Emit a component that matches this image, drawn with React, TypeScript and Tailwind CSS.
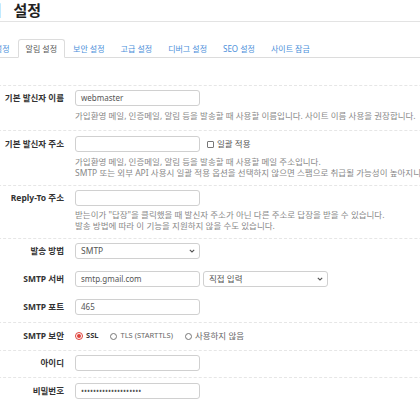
import type { ReactNode } from "react";

const font = { fontFamily: '"Noto Sans", "Noto Sans CJK KR", sans-serif' };

const tabs = ["기본 설정", "알림 설정", "보안 설정", "고급 설정", "디버그 설정", "SEO 설정", "사이트 잠금"];

function Row({ label, children, className = "" }: { label: string; children: ReactNode; className?: string }) {
  return (
    <div className={`flex ${className}`}>
      <div className="w-[107px] shrink-0 pr-[11px] text-right text-[8.5px] font-bold leading-[16px] text-[#333]">
        {label}
      </div>
      <div className="min-w-0 flex-1">{children}</div>
    </div>
  );
}

function Field({ value = "" }: { value?: string }) {
  return (
    <div className="flex h-[16px] w-[125px] items-center rounded-[3px] border border-[#d0d0d0] bg-white px-[5px] text-[8px] text-[#555]">
      {value}
    </div>
  );
}

function Select({ value }: { value: string }) {
  return (
    <div className="flex h-[16px] w-[125px] items-center justify-between rounded-[3px] border border-[#d0d0d0] bg-white pl-[5px] pr-[4px] text-[8.5px] text-[#555]">
      <span>{value}</span>
      <svg width="6" height="4" viewBox="0 0 6 4" fill="none">
        <path d="M0.8 0.8 L3 3 L5.2 0.8" stroke="#555" strokeWidth="1.1" />
      </svg>
    </div>
  );
}

function Help({ children }: { children: ReactNode }) {
  return <p className="whitespace-nowrap text-[8.5px] leading-[11px] text-[#888]">{children}</p>;
}

function Radio({ checked, label, latin }: { checked?: boolean; label: string; latin?: boolean }) {
  return (
    <label className="flex items-center gap-[3px]">
      {checked ? (
        <span className="flex h-[8px] w-[8px] items-center justify-center rounded-full border border-[#e0413a] bg-white">
          <span className="h-[4px] w-[4px] rounded-full bg-[#e0413a]" />
        </span>
      ) : (
        <span className="h-[7px] w-[7px] rounded-full border border-[#777] bg-white" />
      )}
      <span
        className={`${latin ? "text-[7.5px]" : "text-[8.5px]"} ${checked ? "font-bold text-[#333]" : "text-[#666]"}`}
      >
        {label}
      </span>
    </label>
  );
}

export default function App() {
  return (
    <div className="h-[420px] w-[420px] overflow-hidden bg-white" style={font}>
      <div className="ml-[-32px] w-[640px]">
        <div className="h-[22px] border-b border-[#e3e3e3] pl-[6px]">
          <h1 className="text-[15px] font-bold leading-[21px] text-[#222] [word-spacing:8px]">관리 설정</h1>
        </div>

        <div className="ml-[2px] mt-[17px] flex border-b border-[#dcdcdc]">
          {tabs.map((t) => (
            <div
              key={t}
              className={`-mb-px h-[19px] border px-[7px] text-[8px] leading-[17px] ${
                t === "알림 설정"
                  ? "rounded-t-[3px] border-[#dcdcdc] border-b-white bg-white text-[#555]"
                  : "border-transparent text-[#4b8fda]"
              }`}
            >
              {t}
            </div>
          ))}
        </div>

        <div className="mt-[27px] border-t border-dashed border-[#e6e6e6]">
          <Row label="기본 발신자 이름" className="border-b border-dashed border-[#e6e6e6] pb-[9px] pt-[4px]">
            <Field value="webmaster" />
            <div className="mt-[4px]">
              <Help>가입환영 메일, 인증메일, 알림 등을 발송할 때 사용할 이름입니다. 사이트 이름 사용을 권장합니다.</Help>
            </div>
          </Row>

          <Row label="기본 발신자 주소" className="border-b border-dashed border-[#e6e6e6] pb-[7px] pt-[5px]">
            <div className="flex items-center gap-[7px]">
              <Field />
              <label className="flex items-center gap-[3px] text-[8.5px] text-[#555]">
                <span className="h-[7px] w-[7px] rounded-[1px] border border-[#777] bg-white" />
                일괄 적용
              </label>
            </div>
            <div className="mt-[4px]">
              <Help>가입환영 메일, 인증메일, 알림 등을 발송할 때 사용할 메일 주소입니다.</Help>
              <Help>SMTP 또는 외부 API 사용시 일괄 적용 옵션을 선택하지 않으면 스팸으로 취급될 가능성이 높아지니 주의하시기 바랍니다.</Help>
            </div>
          </Row>

          <Row label="Reply-To 주소" className="border-b border-dashed border-[#e6e6e6] pb-[7px] pt-[4px]">
            <Field />
            <div className="mt-[3px]">
              <Help>받는이가 "답장"을 클릭했을 때 발신자 주소가 아닌 다른 주소로 답장을 받을 수 있습니다.</Help>
              <Help>발송 방법에 따라 이 기능을 지원하지 않을 수도 있습니다.</Help>
            </div>
          </Row>

          <div className="flex flex-col gap-[12px] border-b border-dashed border-[#e6e6e6] pb-[7px] pt-[4px]">
            <Row label="발송 방법">
              <Select value="SMTP" />
            </Row>
            <Row label="SMTP 서버">
              <div className="flex gap-[3px]">
                <Field value="smtp.gmail.com" />
                <Select value="직접 입력" />
              </div>
            </Row>
            <Row label="SMTP 포트">
              <Field value="465" />
            </Row>
          </div>

          <Row label="SMTP 보안" className="border-b border-dashed border-[#e6e6e6] pb-[6px] pt-[5px]">
            <div className="flex h-[16px] items-center gap-[12px]">
              <Radio checked latin label="SSL" />
              <Radio latin label="TLS (STARTTLS)" />
              <Radio label="사용하지 않음" />
            </div>
          </Row>

          <Row label="아이디" className="border-b border-dashed border-[#e6e6e6] pb-[6px] pt-[4px]">
            <Field />
          </Row>

          <Row label="비밀번호" className="pb-[10px] pt-[5px]">
            <Field value="••••••••••••••••••••" />
          </Row>
        </div>
      </div>
    </div>
  );
}
